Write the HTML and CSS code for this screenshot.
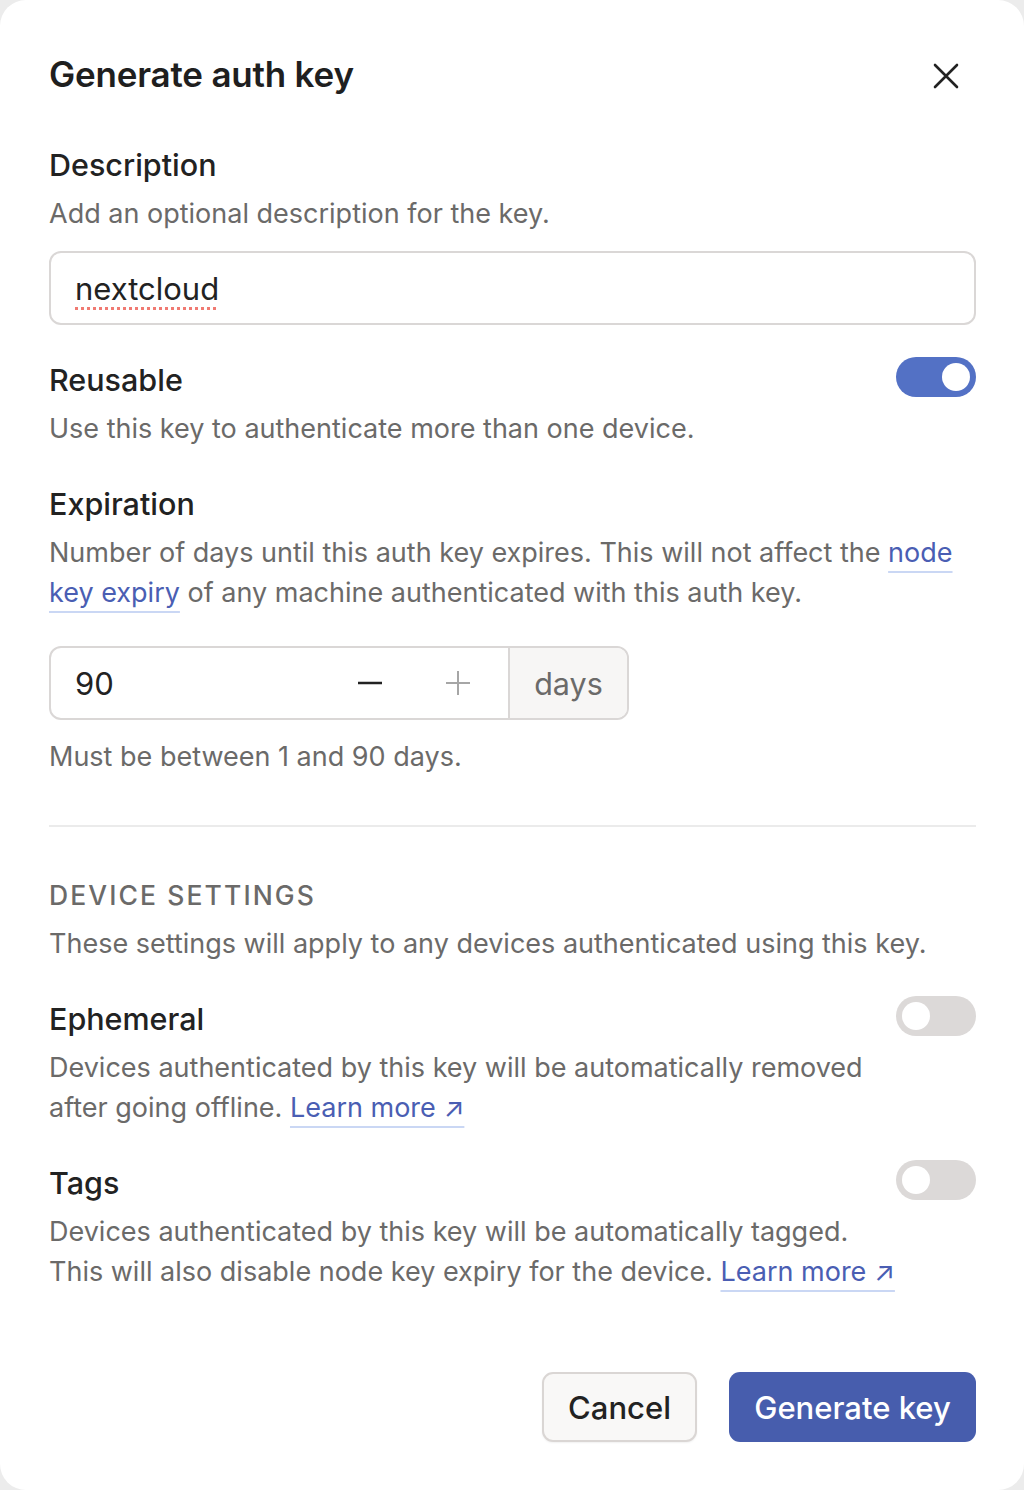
FILE: index.html
```html
<!DOCTYPE html>
<html lang="en">
<head>
<meta charset="utf-8">
<title>Generate auth key</title>
<link rel="stylesheet" href="styles.css">
</head>
<body>
<div class="dialog">
  <header class="head">
    <h1 class="title">Generate auth key</h1>
    <button class="close" aria-label="Close">
      <svg width="28" height="28" viewBox="0 0 28 28"><path d="M3 3 L25 25 M25 3 L3 25" stroke="#222" stroke-width="2.6" stroke-linecap="round"/></svg>
    </button>
  </header>

  <section class="field first">
    <div class="label">Description</div>
    <p class="desc">Add an optional description for the key.</p>
    <div class="input"><span class="spell">nextcloud</span></div>
  </section>

  <section class="field">
    <div class="row">
      <div class="label">Reusable</div>
      <span class="toggle on"><span class="knob"></span></span>
    </div>
    <p class="desc">Use this key to authenticate more than one device.</p>
  </section>

  <section class="field">
    <div class="label">Expiration</div>
    <p class="desc">Number of days until this auth key expires. This will not affect the <a class="link">node key expiry</a> of any machine authenticated with this auth key.</p>
    <div class="numgroup">
      <div class="numinput">
        <span class="numval">90</span>
        <span class="step minus"><svg width="26" height="26" viewBox="0 0 26 26"><path d="M1 13 H25" stroke="#222" stroke-width="2.6"/></svg></span>
        <span class="step plus"><svg width="26" height="26" viewBox="0 0 26 26"><path d="M1 13 H25 M13 1 V25" stroke="#a6a6a6" stroke-width="2"/></svg></span>
      </div>
      <div class="addon">days</div>
    </div>
    <p class="desc hint">Must be between 1 and 90 days.</p>
  </section>

  <hr class="divider">

  <section class="field">
    <div class="section-title">DEVICE SETTINGS</div>
    <p class="desc">These settings will apply to any devices authenticated using this key.</p>
  </section>

  <section class="field">
    <div class="row">
      <div class="label">Ephemeral</div>
      <span class="toggle"><span class="knob"></span></span>
    </div>
    <p class="desc">Devices authenticated by this key will be automatically removed<br>after going offline. <a class="link">Learn more ↗</a></p>
  </section>

  <section class="field">
    <div class="row">
      <div class="label">Tags</div>
      <span class="toggle"><span class="knob"></span></span>
    </div>
    <p class="desc">Devices authenticated by this key will be automatically tagged.<br>This will also disable node key expiry for the device. <a class="link">Learn more ↗</a></p>
  </section>

  <footer class="actions">
    <button class="btn cancel">Cancel</button>
    <button class="btn primary">Generate key</button>
  </footer>
</div>
</body>
</html>
```

FILE: styles.css
```css
* { box-sizing: border-box; }
html, body { margin: 0; padding: 0; }
body {
  background: #ececec;
  font-family: Inter, "Noto Sans", sans-serif;
  color: #222;
}
.dialog {
  width: 1024px;
  height: 1490px;
  background: #fff;
  border-radius: 26px;
  padding: 52px 48px 48px 49px;
  display: flex;
  flex-direction: column;
}
.head {
  display: flex;
  justify-content: space-between;
  align-items: center;
  height: 44px;
}
.title {
  margin: 0;
  font-size: 35px;
  font-weight: 600;
  line-height: 44px;
  color: #1f1f1f;
  letter-spacing: -0.2px;
}
.close {
  background: none;
  border: 0;
  padding: 0;
  margin-right: 16px;
  width: 28px;
  height: 28px;
  display: flex;
  margin-top: 4px;
}
.field { display: flex; flex-direction: column; margin-top: 37px; }
.field.first { margin-top: 51px; }
.label {
  font-size: 30.5px;
  font-weight: 500;
  line-height: 36px;
  color: #222;
}
.row {
  display: flex;
  justify-content: space-between;
  align-items: center;
}
.desc {
  margin: 11px 0 0;
  font-size: 27px;
  line-height: 40px;
  color: #6b6a69;
}
.link {
  color: #4a5eb3;
  text-decoration: underline;
  text-decoration-color: #cad7f4;
  text-decoration-thickness: 2px;
  text-underline-offset: 9px;
}
.input {
  margin-top: 17px;
  height: 74px;
  border: 2px solid #dad7d6;
  border-radius: 12px;
  padding: 0 24px;
  display: flex;
  align-items: center;
  font-size: 31px;
  color: #222;
}
.spell {
  text-decoration: underline dotted #f07a72;
  text-decoration-thickness: 3px;
  text-underline-offset: 7px;
}
.toggle {
  width: 80px;
  height: 40px;
  border-radius: 20px;
  background: #dcd9d8;
  position: relative;
  flex: none;
  margin-top: -6px;
}
.toggle .knob {
  position: absolute;
  top: 6px;
  left: 6px;
  width: 28px;
  height: 28px;
  border-radius: 50%;
  background: #fff;
}
.toggle.on { background: #5371c5; }
.toggle.on .knob { left: auto; right: 6px; }

.numgroup {
  margin-top: 33px;
  width: 580px;
  height: 74px;
  display: flex;
  border: 2px solid #dad7d6;
  border-radius: 12px;
  overflow: hidden;
}
.numinput {
  flex: 1;
  display: flex;
  align-items: center;
  padding-left: 24px;
  font-size: 31px;
  color: #222;
}
.numval { flex: 1; }
.step { display: flex; width: 26px; }
.minus { margin-right: 62px; }
.plus { margin-right: 37px; }
.addon {
  width: 119px;
  background: #f7f6f5;
  border-left: 2px solid #dad7d6;
  display: flex;
  align-items: center;
  justify-content: center;
  font-size: 30.5px;
  color: #6b6a69;
}
.hint { margin-top: 17px; }
.divider {
  border: 0;
  border-top: 2px solid #ebebeb;
  margin: 48px 0 0;
  width: 100%;
}
.divider + .field { margin-top: 50px; }
.section-title {
  font-size: 26.5px;
  line-height: 36px;
  font-weight: 500;
  letter-spacing: 2.1px;
  color: #6b6a69;
}
.actions {
  margin-top: auto;
  display: flex;
  justify-content: flex-end;
  gap: 32px;
}
.btn {
  font-family: Inter, "Noto Sans", sans-serif;
  font-size: 31px;
  font-weight: 500;
  height: 70px;
  border-radius: 11px;
  padding: 0 20px;
}
.cancel {
  background: #f9f8f7;
  border: 2px solid #dad6d4;
  color: #222;
  width: 155px;
  box-shadow: 0 1px 2px rgba(0,0,0,0.06);
}
.primary {
  background: #475dad;
  border: 0;
  color: #fff;
  width: 247px;
}
```
